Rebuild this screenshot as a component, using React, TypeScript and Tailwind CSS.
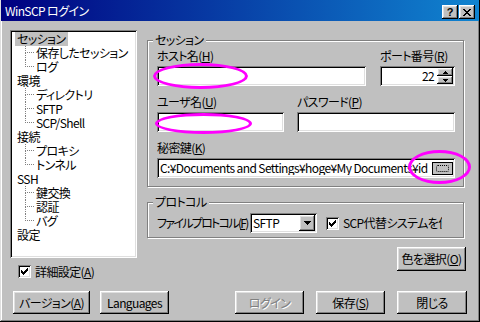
import React from "react";

const raised =
  "shadow-[inset_-1px_-1px_#000,inset_1px_1px_#fff,inset_-2px_-2px_#808080,inset_2px_2px_#dfdfdf]";
const sunken =
  "shadow-[inset_1px_1px_#808080,inset_-1px_-1px_#fff,inset_2px_2px_#000,inset_-2px_-2px_#dfdfdf]";

type TreeNode = { label: string; children?: string[] };

const tree: TreeNode[] = [
  { label: "セッション", children: ["保存したセッション", "ログ"] },
  { label: "環境", children: ["ディレクトリ", "SFTP", "SCP/Shell"] },
  { label: "接続", children: ["プロキシ", "トンネル"] },
  { label: "SSH", children: ["鍵交換", "認証", "バグ"] },
  { label: "設定" },
];

const Accel = ({ text, k }: { text: string; k: string }) => (
  <span className="whitespace-nowrap">
    {text}(<u>{k}</u>)
  </span>
);

const Field = ({
  className = "",
  children,
}: {
  className?: string;
  children?: React.ReactNode;
}) => (
  <div className={`flex h-[20px] items-center bg-white p-[2px] ${sunken} ${className}`}>
    {children}
  </div>
);

const Button = ({
  className = "",
  disabled,
  children,
}: {
  className?: string;
  disabled?: boolean;
  children: React.ReactNode;
}) => (
  <button
    type="button"
    className={`flex shrink-0 items-center justify-center bg-[#c0c0c0] ${raised} ${
      disabled ? "text-[#808080] [text-shadow:1px_1px_#fff]" : ""
    } ${className}`}
  >
    {children}
  </button>
);

const Check = () => (
  <div className={`flex h-[13px] w-[13px] shrink-0 items-center justify-center bg-white ${sunken}`}>
    <svg width="7" height="7" viewBox="0 0 7 7" shapeRendering="crispEdges">
      <path
        d="M0 2h1v3H0zM1 3h1v3H1zM2 4h1v3H2zM3 3h1v3H3zM4 2h1v3H4zM5 1h1v3H5zM6 0h1v3H6z"
        fill="#000"
      />
    </svg>
  </div>
);

const Group = ({
  label,
  className = "",
  children,
}: {
  label: string;
  className?: string;
  children: React.ReactNode;
}) => (
  <div
    className={`relative border border-[#808080] shadow-[inset_1px_1px_#fff,1px_1px_#fff] ${className}`}
  >
    <span className="absolute left-[5px] top-[-8px] bg-[#c0c0c0] px-[2px]">{label}</span>
    {children}
  </div>
);

const Label = ({ children }: { children: React.ReactNode }) => (
  <div className="h-[14px]">{children}</div>
);

export default function App() {
  return (
    <div className="relative flex h-[322px] w-[480px] flex-col overflow-hidden bg-[#c0c0c0] font-['Noto_Sans_CJK_JP',sans-serif] text-[12px] leading-[14px] tracking-[-0.6px] text-black [font-feature-settings:'palt'] shadow-[inset_-1px_-1px_#000,inset_1px_1px_#dfdfdf,inset_-2px_-2px_#808080,inset_2px_2px_#fff]">
      {/* title bar */}
      <div className="mx-[1px] flex h-[21px] shrink-0 items-start bg-[linear-gradient(to_right,#000080,#1084d0)] pl-[4px] pr-[4px]">
        <span className="pt-[4px] text-white">WinSCP ログイン</span>
        <div className="ml-auto flex gap-[1px] pt-[5px]">
          <button
            type="button"
            className={`flex h-[14px] w-[16px] items-center justify-center bg-[#c0c0c0] font-['Liberation_Sans',sans-serif] text-[11px] font-bold leading-[14px] tracking-normal ${raised}`}
          >
            ?
          </button>
          <button
            type="button"
            className={`flex h-[14px] w-[16px] items-center justify-center bg-[#c0c0c0] ${raised}`}
          >
            <svg width="8" height="7" viewBox="0 0 8 7" shapeRendering="crispEdges">
              <path
                d="M0 0h2v1H0zM6 0h2v1H6zM1 1h2v1H1zM5 1h2v1H5zM2 2h4v1H2zM3 3h2v1H3zM2 4h4v1H2zM1 5h2v1H1zM5 5h2v1H5zM0 6h2v1H0zM6 6h2v1H6z"
                fill="#000"
              />
            </svg>
          </button>
        </div>
      </div>

      {/* body */}
      <div className="mt-[9px] flex pl-[10px]">
        {/* left: tree */}
        <div className="flex w-[127px] flex-col">
          <div className={`h-[228px] bg-white p-[2px] ${sunken}`}>
            {tree.map((node) => (
              <div key={node.label}>
                <div className="flex h-[14px] items-center pl-[3px]">
                  <span
                    className={`px-[2px] ${node.label === "セッション" ? "bg-[#c0c0c0]" : ""}`}
                  >
                    {node.label}
                  </span>
                </div>
                {node.children?.map((child, i) => {
                  const last = i === node.children!.length - 1;
                  return (
                    <div key={child} className="flex h-[14px] items-center">
                      <div className="ml-[13px] flex h-full w-[9px] flex-col">
                        <div className="h-[7px] border-b border-l border-dotted border-[#808080]" />
                        <div
                          className={`h-[7px] ${last ? "" : "border-l border-dotted border-[#808080]"}`}
                        />
                      </div>
                      <span className="ml-[2px] whitespace-nowrap">{child}</span>
                    </div>
                  );
                })}
              </div>
            ))}
          </div>
          <div className="ml-[8px] mt-[7px] flex h-[13px] items-center">
            <Check />
            <span className="ml-[4px]">
              <Accel text="詳細設定" k="A" />
            </span>
          </div>
        </div>

        {/* right: session + protocol */}
        <div className="ml-[10px] flex w-[317px] flex-col pt-[10px]">
          <Group label="セッション" className="pb-[8px] pl-[9px] pr-[8px] pt-[8px]">
            <div className="flex gap-[14px]">
              <div className="flex w-[209px] flex-col gap-[3px]">
                <Label>
                  <Accel text="ホスト名" k="H" />
                </Label>
                <Field />
              </div>
              <div className="flex w-[75px] flex-col gap-[3px]">
                <Label>
                  <Accel text="ポート番号" k="R" />
                </Label>
                <Field>
                  <span className="flex-1 pr-[3px] text-right">22</span>
                  <div className="flex h-full w-[16px] flex-col">
                    <div className={`flex h-[8px] items-center justify-center bg-[#c0c0c0] ${raised}`}>
                      <svg width="5" height="3" viewBox="0 0 5 3" shapeRendering="crispEdges">
                        <path d="M2 0h1v1H2zM1 1h3v1H1zM0 2h5v1H0z" fill="#000" />
                      </svg>
                    </div>
                    <div className={`flex h-[8px] items-center justify-center bg-[#c0c0c0] ${raised}`}>
                      <svg width="5" height="3" viewBox="0 0 5 3" shapeRendering="crispEdges">
                        <path d="M0 0h5v1H0zM1 1h3v1H1zM2 2h1v1H2z" fill="#000" />
                      </svg>
                    </div>
                  </div>
                </Field>
              </div>
            </div>

            <div className="mt-[9px] flex gap-[13px]">
              <div className="flex w-[127px] flex-col gap-[3px]">
                <Label>
                  <Accel text="ユーザ名" k="U" />
                </Label>
                <Field />
              </div>
              <div className="flex w-[158px] flex-col gap-[3px]">
                <Label>
                  <Accel text="パスワード" k="P" />
                </Label>
                <Field />
              </div>
            </div>

            <div className="mt-[9px] flex flex-col gap-[3px]">
              <Label>
                <Accel text="秘密鍵" k="K" />
              </Label>
              <Field>
                <div className="min-w-0 flex-1 overflow-hidden whitespace-nowrap pl-[1px]">
                  C:¥Documents and Settings¥hoge¥My Documents¥id
                </div>
                <div className="ml-[2px] flex h-[13px] w-[21px] shrink-0 items-center justify-center border border-black bg-[#c0c0c0]">
                  <div className="h-[7px] w-[13px] rounded-[2px] border border-dotted border-black" />
                </div>
              </Field>
            </div>
          </Group>

          <Group label="プロトコル" className="mt-[15px] pb-[4px] pl-[9px] pr-[8px] pt-[10px]">
            <div className="flex h-[20px] items-center">
              <div className="w-[93px] shrink-0 whitespace-nowrap tracking-[-1.7px]">
                <Accel text="ファイルプロトコル" k="F" />
              </div>
              <Field className="w-[67px] shrink-0">
                <span className="flex-1 pl-[1px]">SFTP</span>
                <div className={`flex h-full w-[16px] items-center justify-center bg-[#c0c0c0] ${raised}`}>
                  <svg width="7" height="4" viewBox="0 0 7 4" shapeRendering="crispEdges">
                    <path d="M0 0h7v1H0zM1 1h5v1H1zM2 2h3v1H2zM3 3h1v1H3z" fill="#000" />
                  </svg>
                </div>
              </Field>
              <div className="ml-[9px] flex items-center">
                <Check />
                <div className="ml-[4px] w-[99px] overflow-hidden whitespace-nowrap">
                  SCP代替システムを使用
                </div>
              </div>
            </div>
          </Group>

          <Button className="-mr-[2px] mt-[9px] h-[24px] w-[69px] self-end">
            <Accel text="色を選択" k="O" />
          </Button>
        </div>
      </div>

      {/* buttons */}
      <div className="mt-[13px] flex pl-[13px] pr-[13px]">
        <Button className="h-[23px] w-[77px]">
          <Accel text="バージョン" k="A" />
        </Button>
        <Button className="ml-[10px] h-[23px] w-[69px]">Languages</Button>
        <Button disabled className="ml-auto h-[23px] w-[69px]">
          ログイン
        </Button>
        <Button className="ml-[12px] h-[23px] w-[69px]">
          <Accel text="保存" k="S" />
        </Button>
        <Button className="ml-[12px] h-[23px] w-[70px]">閉じる</Button>
      </div>

      {/* pink annotation ellipses */}
      <div className="pointer-events-none absolute left-[153px] top-[63px] h-[26px] w-[95px] rounded-[50%] border-[3px] border-[#ff00ff]" />
      <div className="pointer-events-none absolute left-[155px] top-[113px] h-[21px] w-[97px] rounded-[50%] border-[3px] border-[#ff00ff]" />
      <div className="pointer-events-none absolute left-[408px] top-[150px] h-[34px] w-[63px] rounded-[50%] border-[3px] border-[#ff00ff]" />
    </div>
  );
}
